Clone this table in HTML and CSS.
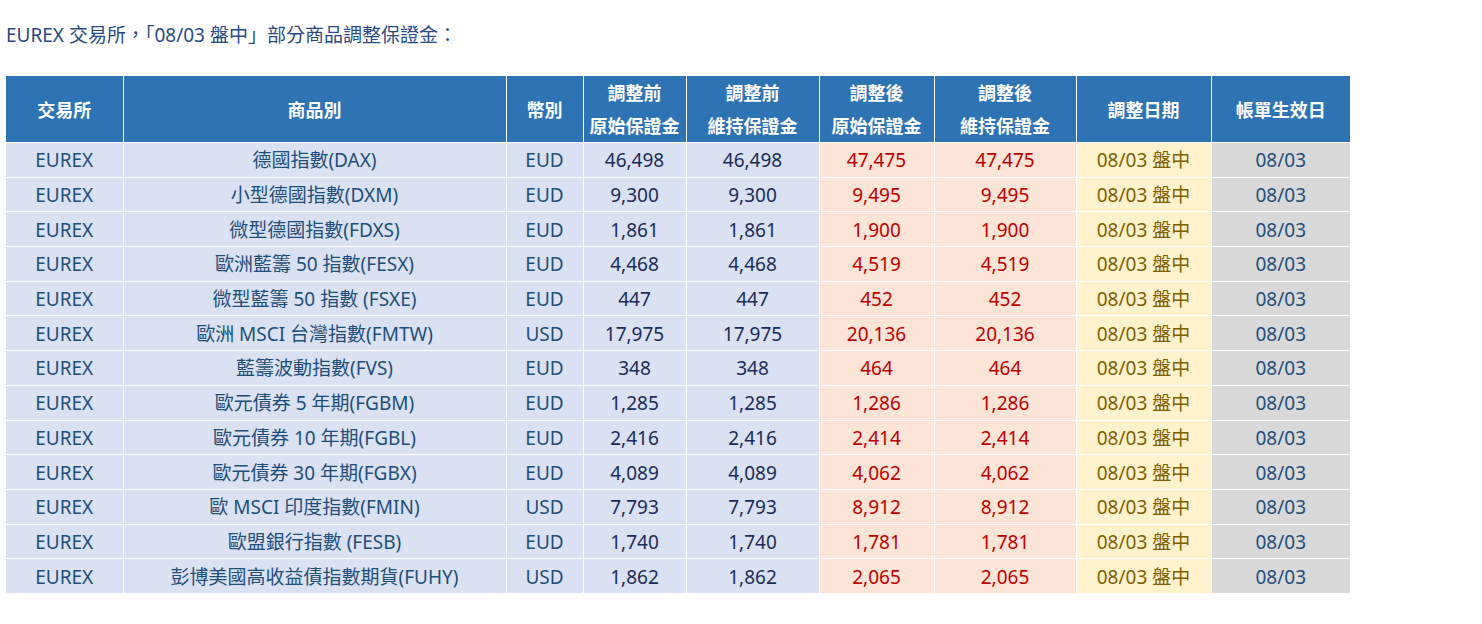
FILE: index.html
```html
<!DOCTYPE html>
<html lang="zh-Hant">
<head>
<meta charset="utf-8">
<link rel="stylesheet" href="styles.css">
</head>
<body>
<div class="page">
  <p class="title">EUREX 交易所，「08/03 盤中」部分商品調整保證金：</p>
  <table class="margin-table">
    <colgroup>
      <col class="c1"><col class="c2"><col class="c3"><col class="c4"><col class="c5"><col class="c6"><col class="c7"><col class="c8"><col class="c9">
    </colgroup>
    <thead>
      <tr>
        <th>交易所</th>
        <th>商品別</th>
        <th>幣別</th>
        <th>調整前<br>原始保證金</th>
        <th>調整前<br>維持保證金</th>
        <th>調整後<br>原始保證金</th>
        <th>調整後<br>維持保證金</th>
        <th>調整日期</th>
        <th>帳單生效日</th>
      </tr>
    </thead>
    <tbody>
      <tr><td class="ex">EUREX</td><td class="prod">德國指數(DAX)</td><td class="cur">EUD</td><td class="pre">46,498</td><td class="pre">46,498</td><td class="post">47,475</td><td class="post">47,475</td><td class="date">08/03 盤中</td><td class="eff">08/03</td></tr>
      <tr><td class="ex">EUREX</td><td class="prod">小型德國指數(DXM)</td><td class="cur">EUD</td><td class="pre">9,300</td><td class="pre">9,300</td><td class="post">9,495</td><td class="post">9,495</td><td class="date">08/03 盤中</td><td class="eff">08/03</td></tr>
      <tr><td class="ex">EUREX</td><td class="prod">微型德國指數(FDXS)</td><td class="cur">EUD</td><td class="pre">1,861</td><td class="pre">1,861</td><td class="post">1,900</td><td class="post">1,900</td><td class="date">08/03 盤中</td><td class="eff">08/03</td></tr>
      <tr><td class="ex">EUREX</td><td class="prod">歐洲藍籌 50 指數(FESX)</td><td class="cur">EUD</td><td class="pre">4,468</td><td class="pre">4,468</td><td class="post">4,519</td><td class="post">4,519</td><td class="date">08/03 盤中</td><td class="eff">08/03</td></tr>
      <tr><td class="ex">EUREX</td><td class="prod">微型藍籌 50 指數 (FSXE)</td><td class="cur">EUD</td><td class="pre">447</td><td class="pre">447</td><td class="post">452</td><td class="post">452</td><td class="date">08/03 盤中</td><td class="eff">08/03</td></tr>
      <tr><td class="ex">EUREX</td><td class="prod">歐洲 MSCI 台灣指數(FMTW)</td><td class="cur">USD</td><td class="pre">17,975</td><td class="pre">17,975</td><td class="post">20,136</td><td class="post">20,136</td><td class="date">08/03 盤中</td><td class="eff">08/03</td></tr>
      <tr><td class="ex">EUREX</td><td class="prod">藍籌波動指數(FVS)</td><td class="cur">EUD</td><td class="pre">348</td><td class="pre">348</td><td class="post">464</td><td class="post">464</td><td class="date">08/03 盤中</td><td class="eff">08/03</td></tr>
      <tr><td class="ex">EUREX</td><td class="prod">歐元債券 5 年期(FGBM)</td><td class="cur">EUD</td><td class="pre">1,285</td><td class="pre">1,285</td><td class="post">1,286</td><td class="post">1,286</td><td class="date">08/03 盤中</td><td class="eff">08/03</td></tr>
      <tr><td class="ex">EUREX</td><td class="prod">歐元債券 10 年期(FGBL)</td><td class="cur">EUD</td><td class="pre">2,416</td><td class="pre">2,416</td><td class="post">2,414</td><td class="post">2,414</td><td class="date">08/03 盤中</td><td class="eff">08/03</td></tr>
      <tr><td class="ex">EUREX</td><td class="prod">歐元債券 30 年期(FGBX)</td><td class="cur">EUD</td><td class="pre">4,089</td><td class="pre">4,089</td><td class="post">4,062</td><td class="post">4,062</td><td class="date">08/03 盤中</td><td class="eff">08/03</td></tr>
      <tr><td class="ex">EUREX</td><td class="prod">歐 MSCI 印度指數(FMIN)</td><td class="cur">USD</td><td class="pre">7,793</td><td class="pre">7,793</td><td class="post">8,912</td><td class="post">8,912</td><td class="date">08/03 盤中</td><td class="eff">08/03</td></tr>
      <tr><td class="ex">EUREX</td><td class="prod">歐盟銀行指數 (FESB)</td><td class="cur">EUD</td><td class="pre">1,740</td><td class="pre">1,740</td><td class="post">1,781</td><td class="post">1,781</td><td class="date">08/03 盤中</td><td class="eff">08/03</td></tr>
      <tr><td class="ex">EUREX</td><td class="prod">彭博美國高收益債指數期貨(FUHY)</td><td class="cur">USD</td><td class="pre">1,862</td><td class="pre">1,862</td><td class="post">2,065</td><td class="post">2,065</td><td class="date">08/03 盤中</td><td class="eff">08/03</td></tr>
    </tbody>
  </table>
</div>
</body>
</html>
```

FILE: styles.css
```css
html, body {
  margin: 0;
  padding: 0;
  background: #ffffff;
}

body {
  font-family: "Noto Sans", "Noto Sans CJK TC", sans-serif;
  font-size: 19px;
}

.page {
  padding: 22px 6px 0 6px;
}

.title {
  margin: 0 0 28px 0;
  line-height: 26px;
  font-size: 19px;
  color: #2a4a85;
}

.margin-table {
  border-collapse: collapse;
  table-layout: fixed;
  width: 1344px;
}

.c1 { width: 117px; }
.c2 { width: 383px; }
.c3 { width: 77px; }
.c4 { width: 103px; }
.c5 { width: 133px; }
.c6 { width: 115px; }
.c7 { width: 142px; }
.c8 { width: 135px; }
.c9 { width: 139px; }

.margin-table th {
  background: #2e74b5;
  color: #ffffff;
  font-family: "Noto Sans CJK TC", sans-serif;
  font-weight: bold;
  font-size: 18px;
  line-height: 33px;
  height: 66px;
  padding: 0;
  text-align: center;
  border: 1px solid #ffffff;
  border-top: 0;
}

.margin-table th:first-child { border-left: 0; }
.margin-table th:last-child { border-right: 0; }

.margin-table td {
  height: 32.7px;
  padding: 1px 0 0 0;
  text-align: center;
  line-height: 24px;
  border: 1px solid #ffffff;
  white-space: nowrap;
}

.margin-table td:first-child { border-left: 0; }
.margin-table td:last-child { border-right: 0; }
.margin-table tbody tr:last-child td { border-bottom: 0; }

.ex, .prod, .cur {
  background: #d9e1f2;
  color: #1f4e79;
}

.pre {
  background: #d9e1f2;
  color: #1c2b5a;
}

.post {
  background: #fce4d6;
  color: #c00000;
}

.date {
  background: #fff2cc;
  color: #7f6000;
}

.eff {
  background: #d9d9d9;
  color: #1f4e79;
}
```
